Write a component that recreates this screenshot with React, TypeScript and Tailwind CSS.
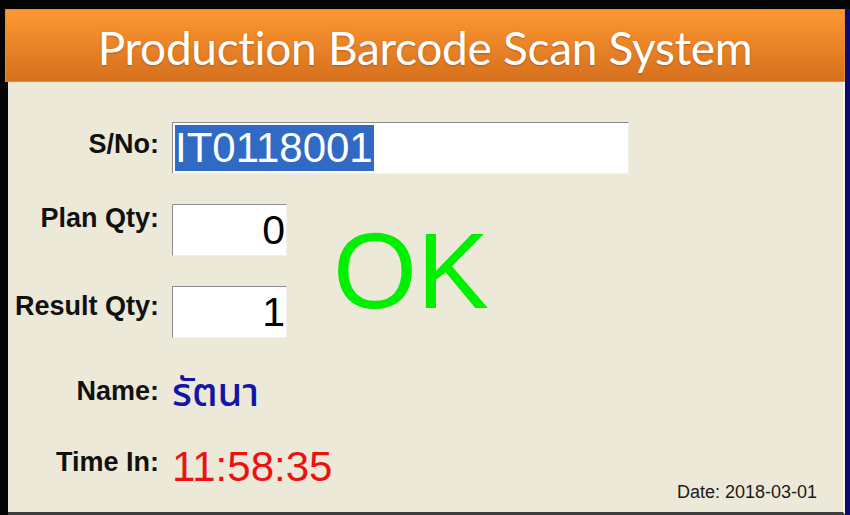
import React from 'react';

const label = "text-right text-[27px] font-bold text-[#111] leading-none";

export default function App() {
  return (
    <div className="w-[850px] h-[515px] bg-[#050505] overflow-hidden pt-[9px]" style={{ fontFamily: '"Liberation Sans", Arial, sans-serif' }}>
      <div className="flex h-[506px]">
        <div className="flex-1 flex flex-col">
          {/* header */}
          <div className="ml-[5px] h-[73px] bg-gradient-to-b from-[#fd9833] to-[#d6701d] flex items-center justify-center pt-[5px] border border-[#e58a3a]">
            <h1 className="text-white text-[46px] leading-none tracking-[-0.3px] [text-shadow:0_1px_2px_rgba(120,50,0,0.45)]" style={{ fontFamily: 'Lato, "Open Sans", sans-serif' }}>
              Production Barcode Scan System
            </h1>
          </div>

          {/* main panel */}
          <div className="ml-[8px] flex-1 bg-[#ece9d8] border-r-2 border-[#f7f5ee] border-b-[3px] border-b-[#3c3c3c] pt-[40px]">
            <div className="grid grid-cols-[151px_115px_1fr] gap-x-[13px] gap-y-[30px] grid-rows-[52px_52px_52px_46px_46px]">
              {/* S/No */}
              <div className={`${label} self-center pb-[8px]`}>S/No:</div>
              <div className="col-span-2 w-[457px] h-[52px] bg-white border-t border-l border-[#8d8d8d] border-b border-r border-b-[#f2f0e8] border-r-[#f2f0e8] pt-[2px] pl-[2px]">
                <span className="inline-block bg-[#316ac5] text-white text-[42px] leading-[46px] pr-[1px]">IT0118001</span>
              </div>

              {/* Plan Qty */}
              <div className={`${label} self-center pb-[24px]`}>Plan Qty:</div>
              <div className="h-[52px] bg-white border-t border-l border-[#8d8d8d] border-b border-r border-b-[#f2f0e8] border-r-[#f2f0e8] flex items-center justify-end pr-[1px] text-[41px] text-black leading-none">
                0
              </div>

              {/* OK */}
              <div className="row-span-2 flex items-center pl-[33px]">
                <span className="text-[#00f000] text-[108px] leading-none">OK</span>
              </div>

              {/* Result Qty */}
              <div className={`${label} self-center pb-[12px]`}>Result Qty:</div>
              <div className="h-[52px] bg-white border-t border-l border-[#8d8d8d] border-b border-r border-b-[#f2f0e8] border-r-[#f2f0e8] flex items-center justify-end pr-[1px] text-[41px] text-black leading-none">
                1
              </div>

              {/* Name */}
              <div className={`${label} self-center`}>Name:</div>
              <div className="col-span-2 flex items-center pt-[6px] text-[40px] font-medium text-[#1414aa] leading-none" style={{ fontFamily: 'Tahoma, "Noto Sans Thai", "Noto Sans", sans-serif' }}>
                รัตนา
              </div>

              {/* Time In */}
              <div className={`${label} self-center pb-[10px]`}>Time In:</div>
              <div className="col-span-2 flex items-start justify-between pr-[26px]">
                <span className="text-[42px] leading-[46px] text-[#ee1111]">11:58:35</span>
                <span className="mt-[38px] text-[18px] leading-[21px] text-[#1a1a1a]">Date: 2018-03-01</span>
              </div>
            </div>
          </div>
        </div>
        <div className="w-[5px] bg-[#0c0c70]" />
      </div>
    </div>
  );
}
